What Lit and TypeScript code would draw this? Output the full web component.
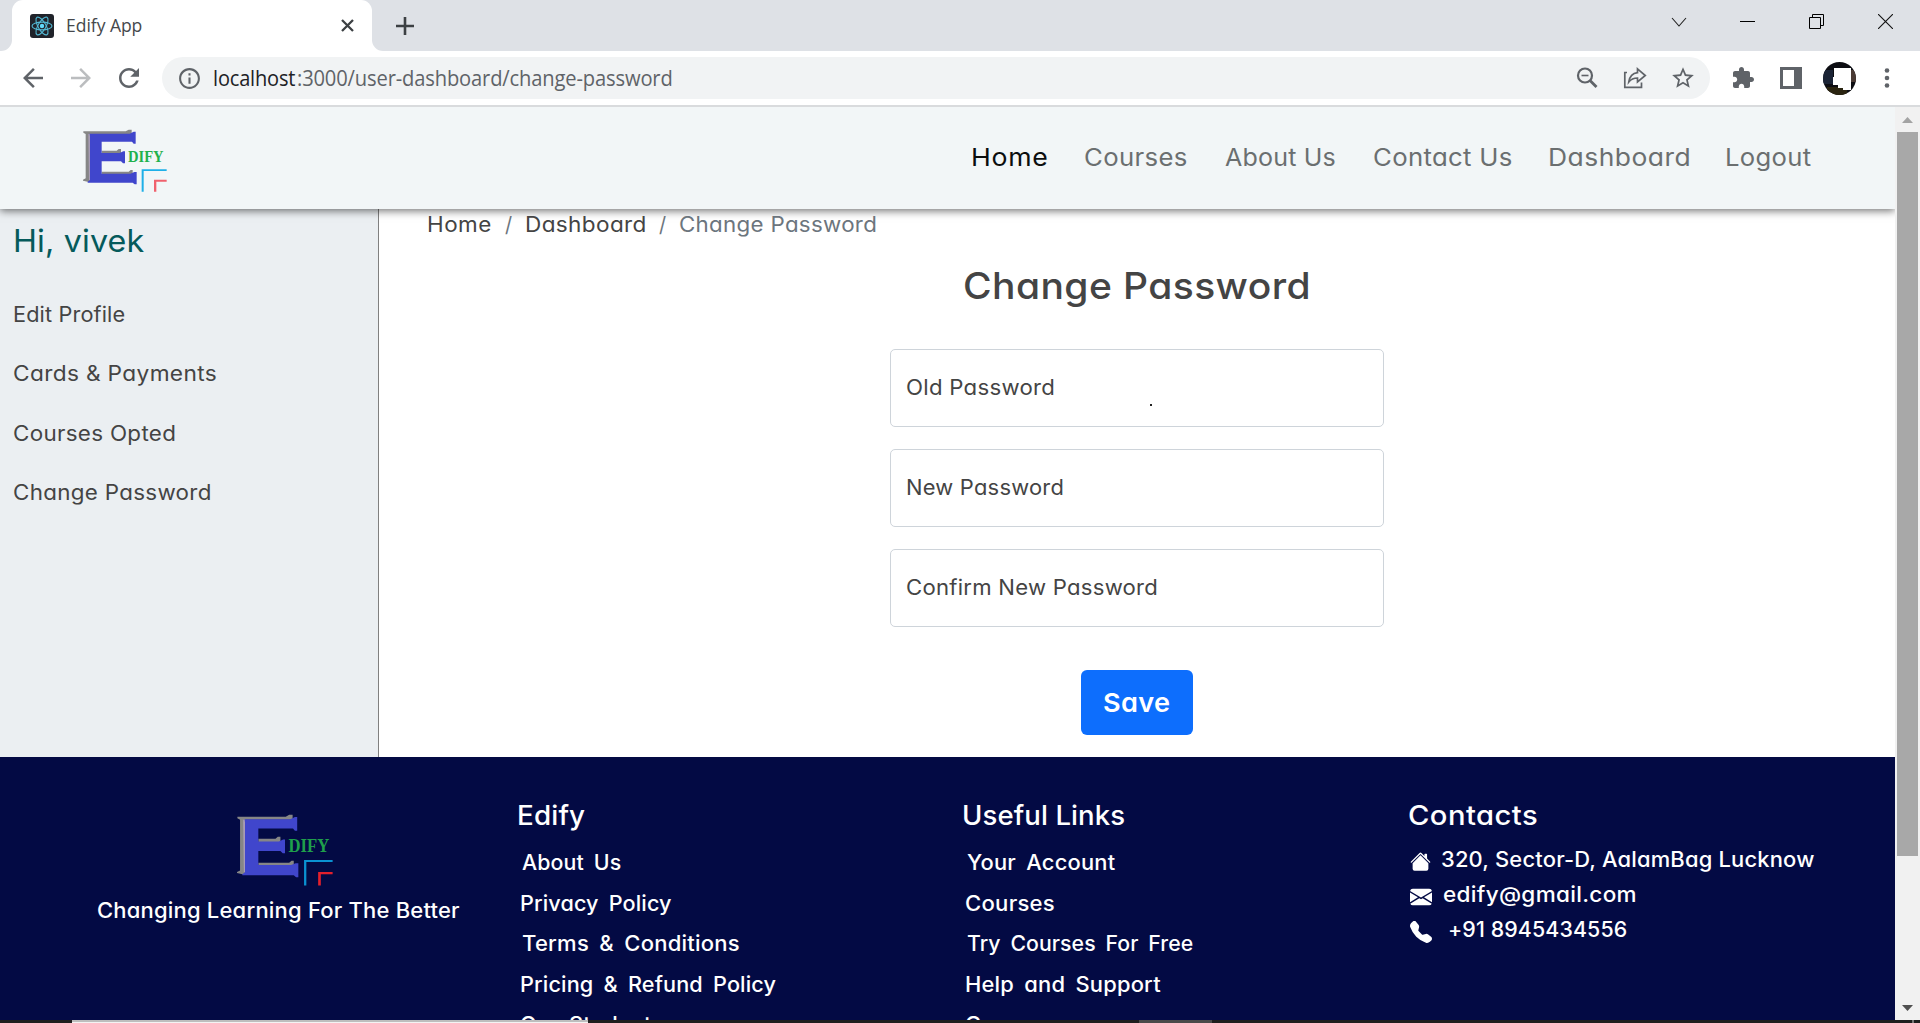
import { LitElement, html, css, svg } from "lit";
import { customElement, property } from "lit/decorators.js";

/**
 * One line of text whose ink spans `width` pixels: `stretch` is the share of the
 * missing width that widens the glyphs, the rest goes into the tracking.
 */
@customElement("fit-text")
class FitText extends LitElement {
  @property({ type: Number }) width = 0;
  @property({ type: Number }) stretch = 0.75;
  @property() text = "";
  static styles = css`
    :host { display: inline-block; flex: none; white-space: pre; text-align: left; }
    .t { display: inline-block; transform-origin: 0 50%; }
  `;
  render() {
    return html`<span class="t">${this.text}</span>`;
  }
  updated() {
    const span = this.renderRoot.querySelector("span") as HTMLElement;
    span.style.letterSpacing = "0px";
    span.style.margin = "0";
    span.style.transform = "none";
    const cs = getComputedStyle(span);
    const ctx = document.createElement("canvas").getContext("2d")!;
    ctx.font = `${cs.fontWeight} ${cs.fontSize} ${cs.fontFamily}`;
    const m = ctx.measureText(this.text);
    const left = -m.actualBoundingBoxLeft;
    const right = m.width - m.actualBoundingBoxRight;
    const ink = span.getBoundingClientRect().width - left - right;
    const scale = 1 + (this.width / ink - 1) * this.stretch;
    const ls = (this.width / scale - ink) / Math.max(1, this.text.length - 1);
    this.style.width = this.width + "px";
    span.style.letterSpacing = ls + "px";
    span.style.marginLeft = -left * scale + "px";
    span.style.marginRight = "-60px";
    span.style.transform = `scaleX(${scale})`;
  }
}

const t = (text: string, width: number, cls = "") =>
  html`<fit-text class=${cls} .text=${text} .width=${width}></fit-text>`;

@customElement("edify-logo")
class EdifyLogo extends LitElement {
  static styles = css`
    :host { display: block; --green: #22b14c; --cyan: #1fb0e8; --red: #f0616d; }
    svg { display: block; width: 100%; height: 100%; }
    .word { font: bold 47px "Liberation Serif", serif; fill: var(--green); }
    .cyan { fill: var(--cyan); }
    .red { fill: var(--red); }
  `;
  render() {
    return html`<svg viewBox="250 388 252 189" preserveAspectRatio="none">
      <path fill="#868686" d="M251 395H378L387 390H396V403H272V541L267 547L250 543V540L258 536V403L251 399ZM306 453H351L357 448H364V462H306ZM306 516H387L393 511H399V524H306Z"/>
      <path fill="#a79bb5" d="M266 403H272V541H268Z"/>
      <path fill="#4046cc" d="M270 402H390L402 396H408V432H402L397 426H306V460H360L371 455H376V491H370L364 485H306V522H392L404 517H411V554H405L399 549H264V546L271 541V410Z"/>
      <text class="word" x="385" y="488" textLength="107" lengthAdjust="spacingAndGlyphs">DIFY</text>
      <path class="cyan" d="M426 509H501V514H432V576H426Z"/>
      <path class="red" d="M463 540H501V546H470V576H463Z"/>
    </svg>`;
  }
}

@customElement("browser-chrome")
class BrowserChrome extends LitElement {
  static styles = css`
    :host { display: block; font-family: "Open Sans", "Noto Sans", sans-serif; }
    svg { display: block; flex: none; }
    .tabs { height: 51px; background: #dee1e6; display: flex; align-items: stretch; }
    .foot { width: 12px; background: #fff; }
    .foot i { display: block; height: 100%; background: #dee1e6; border-bottom-right-radius: 11px; }
    .rest { flex: 1; background: #fff; }
    .rest > div { height: 100%; background: #dee1e6; border-bottom-left-radius: 11px; display: flex; justify-content: space-between; align-items: center; }
    .tab { width: 360px; box-sizing: border-box; background: #fff; border-radius: 11px 11px 0 0; display: flex; align-items: center; padding: 0 18px 0 18px; }
    .title { margin-left: 13px; font-size: 17.8px; line-height: 24px; color: #45484c; flex: 1; margin-top: -1px; }
    .plus { margin-left: 24px; }
    .win { display: flex; height: 43px; align-self: flex-start; }
    .win div { width: 69px; display: flex; align-items: center; justify-content: center; }
    .bar { height: 54px; background: #fff; display: flex; align-items: center; padding: 0 9px; border-bottom: 2px solid #d9dbdd; }
    .c { width: 48px; height: 42px; display: flex; align-items: center; justify-content: center; flex: none; color: #5f6368; }
    .dim { color: #bbbdbf; }
    .omni { height: 42px; flex: 1; margin: 0 9px; border-radius: 21px; background: #f1f3f4; display: flex; align-items: center; padding-right: 3px; font-size: 21px; line-height: 30px; }
    .info { width: 52px; padding-left: 2px; box-sizing: border-box; }
    .host { color: #202124; }
    .path { color: #5f6368; flex: 1; margin-left: 3px; }
  `;
  render() {
    const icon = (d: string, size: number) =>
      html`<svg width=${size} height=${size} viewBox="0 0 24 24"><path fill="currentColor" d=${d}/></svg>`;
    const orbit = (a: number) =>
      svg`<ellipse cx="12" cy="12" rx="10" ry="3.9" transform="rotate(${a} 12 12)"/>`;
    return html`
      <div class="tabs">
        <div class="foot"><i></i></div>
        <div class="tab">
          <svg width="24" height="24"><rect width="24" height="24" rx="3" fill="#20232a"/><g fill="none" stroke="#53b9d4" stroke-width="1.1">${[0, 60, 120].map(orbit)}</g><circle cx="12" cy="12" r="2.2" fill="#61dafb"/></svg>
          <div class="title">${t("Edify App", 74.5)}</div>
          <svg width="13" height="13"><path d="M1 1L12 12M12 1L1 12" stroke="#3c4043" stroke-width="2.3"/></svg>
        </div>
        <div class="rest"><div>
          <svg class="plus" width="18" height="18"><path d="M9 0V18M0 9H18" stroke="#3c4043" stroke-width="2.6"/></svg>
          <div class="win">
            <div><svg width="16" height="16"><path d="M1 4L8 12L15 4" fill="none" stroke="#222" stroke-width="1.1"/></svg></div>
            <div><svg width="15" height="15"><path d="M0 7.5H15" stroke="#000"/></svg></div>
            <div><svg width="15" height="15"><path d="M.5 3.5H11.5V14.5H.5ZM3.5 3.5V.5H14.5V11.5H11.5" fill="none" stroke="#000"/></svg></div>
            <div><svg width="15" height="15"><path d="M0 0L15 15M15 0L0 15" stroke="#111" stroke-width="1.1"/></svg></div>
          </div>
        </div></div>
      </div>
      <div class="bar">
        <div class="c">${icon("M20 11H7.83l5.59-5.59L12 4l-8 8 8 8 1.41-1.41L7.83 13H20v-2z", 30)}</div>
        <div class="c dim">${icon("M12 4l-1.41 1.41L16.17 11H4v2h12.17l-5.58 5.59L12 20l8-8z", 30)}</div>
        <div class="c">${icon("M17.65 6.35C16.2 4.9 14.21 4 12 4c-4.42 0-7.99 3.58-7.99 8s3.57 8 7.99 8c3.73 0 6.84-2.55 7.73-6h-2.08c-.82 2.33-3.04 4-5.65 4-3.31 0-6-2.69-6-6s2.69-6 6-6c1.66 0 3.14.69 4.22 1.78L13 11h7V4l-2.35 2.35z", 30)}</div>
        <div class="omni">
          <div class="c info">${icon("M11 7h2v2h-2zm0 4h2v6h-2zm1-9C6.48 2 2 6.48 2 12s4.48 10 10 10 10-4.48 10-10S17.52 2 12 2zm0 18c-4.41 0-8-3.59-8-8s3.59-8 8-8 8 3.59 8 8-3.59 8-8 8z", 25)}</div>
          ${t("localhost", 81, "host")}
          <div class="path">${t(":3000/user-dashboard/change-password", 374)}</div>
          <div class="c"><svg width="22" height="22" fill="none" stroke="currentColor"><circle cx="9" cy="8.500" r="7" stroke-width="2.200"/><path d="M14 13.500L20.500 20" stroke-width="2.800"/><path d="M5.500 8.500H12.500" stroke-width="1.600"/></svg></div>
          <div class="c"><svg width="24" height="22" fill="none" stroke="currentColor" stroke-width="1.7"><path d="M4 5.5H1.8V20.3H18.5V15.5"/><path d="M14.5 1.8L22.3 8.5L14.5 15V11C10.5 11 8 12.2 5.8 15C6.6 9.8 9.5 6.3 14.5 5.7Z"/></svg></div>
          <div class="c">${icon("M22 9.24l-7.19-.62L12 2 9.19 8.63 2 9.24l5.46 4.73L5.82 21 12 17.27 18.18 21l-1.63-7.03L22 9.24zM12 15.4l-3.76 2.27 1-4.28-3.32-2.88 4.38-.38L12 6.1l1.71 4.04 4.38.38-3.32 2.88 1 4.28L12 15.4z", 26)}</div>
        </div>
        <div class="c">${icon("M20.5 11H19V7c0-1.1-.9-2-2-2h-4V3.5C13 2.12 11.88 1 10.5 1S8 2.12 8 3.5V5H4c-1.1 0-1.99.9-1.99 2v3.8H3.5c1.49 0 2.7 1.21 2.7 2.7s-1.21 2.7-2.7 2.7H2V20c0 1.1.9 2 2 2h3.8v-1.5c0-1.49 1.21-2.7 2.7-2.7 1.49 0 2.7 1.21 2.7 2.7V22H17c1.1 0 2-.9 2-2v-4h1.5c1.38 0 2.5-1.12 2.5-2.5S21.88 11 20.5 11z", 24)}</div>
        <div class="c"><svg width="22" height="22"><path fill="currentColor" fill-rule="evenodd" d="M0 0H22V22H0ZM3 3V19H14V3Z"/></svg></div>
        <div class="c"><svg width="33" height="33"><defs><clipPath id="a"><circle cx="16.5" cy="16.5" r="16.5"/></clipPath></defs><g clip-path="url(#a)"><rect width="33" height="33" fill="#0c0d12"/><path fill="#1b2436" d="M0 8H10V22H0Z"/><path fill="#2a2410" d="M4 25H24V33H4Z"/><path fill="#4a3a34" d="M28 8H33V20H28Z"/><path fill="#fff" d="M11 6H28V28H20V26H15V23H10V15H11Z"/></g></svg></div>
        <div class="c"><svg width="6" height="20" fill="currentColor"><circle cx="3" cy="2.5" r="2.3"/><circle cx="3" cy="10" r="2.3"/><circle cx="3" cy="17.5" r="2.3"/></svg></div>
      </div>`;
  }
}

@customElement("app-root")
class AppRoot extends LitElement {
  static styles = css`
    :host { display: flex; flex-direction: column; width: 1920px; height: 1023px; overflow: hidden; background: #fff; font-family: Inter, "Open Sans", sans-serif; font-feature-settings: "cv11"; font-size: 20.8px; color: #444; }
    svg { display: block; }
    .view { display: flex; height: 913px; flex: none; }
    .page { width: 1895px; display: flex; flex-direction: column; overflow: hidden; }
    .nav { height: 102px; flex: none; box-sizing: border-box; background: #f2f6f7; box-shadow: 0 2px 8px rgba(0,0,0,.55); display: flex; align-items: center; justify-content: space-between; padding: 0 84px 0 83px; position: relative; font-size: 24.2px; color: #6b6f70; }
    .nav edify-logo { width: 84px; height: 63px; margin-top: 5px; }
    .links { display: flex; gap: 38.6px; margin-top: -1px; }
    .on { color: #0c0e0e; }
    .body { display: flex; height: 548px; flex: none; }
    .side { width: 379px; background: #ebeff2; border-right: 1px solid #808080; padding: 12px 0 0 14px; box-sizing: border-box; }
    .hi { font-size: 31.3px; line-height: 41px; color: #055a5b; margin: 0 0 24px 1px; height: 40px; }
    .item { height: 59.3px; line-height: 59.3px; }
    .main { flex: 1; display: flex; flex-direction: column; align-items: center; }
    .crumbs { align-self: flex-start; margin-left: 49.5px; display: flex; gap: 13.5px; height: 31px; line-height: 31px; color: #6c757d; }
    .crumbs .dark { color: #444; }
    h1 { margin: 22px 0 39px; height: 48px; line-height: 48px; font-size: 37px; font-weight: 500; }
    .form { display: flex; flex-direction: column; gap: 22px; position: relative; }
    .field { width: 494px; height: 78px; box-sizing: border-box; border: 1px solid #ced4da; border-radius: 5px; padding-left: 16.5px; line-height: 76px; }
    .dot { position: absolute; left: 260px; top: 55px; width: 2px; height: 2px; background: #222; }
    .save { margin-top: 43px; width: 112px; height: 65px; border: 0; padding: 0; border-radius: 6px; background: #0d6efd; color: #fff; font: 600 26px/65px Inter, sans-serif; font-feature-settings: "cv11"; flex: none; display: flex; justify-content: center; }
    .footer { flex: 1; background: #030a44; color: #fff; font-weight: 500; display: flex; }
    .brand { width: 519.5px; padding-top: 57px; display: flex; flex-direction: column; box-sizing: border-box; padding-left: 98px; }
    .brand edify-logo { width: 96px; height: 72px; margin-left: 139px; --cyan: #0a92d2; --red: #e3202c; --green: #1f9f4b; }
    .tag { line-height: 30px; height: 30px; margin-top: 9.5px; }
    .col { width: 445px; padding-top: 39px; }
    h2 { margin: 0 0 6px; font-size: 27px; line-height: 40px; height: 40px; font-weight: 500; }
    .link { height: 40.5px; line-height: 42.5px; padding-left: 2px; word-spacing: 4px; }
    .contact { height: 35px; line-height: 35px; display: flex; align-items: center; }
    .contact svg { width: 22px; height: 22px; margin: 5px 11px 0 0; }
    .contact svg.house { width: 21px; height: 21px; margin: 3px 11.5px 0 .5px; }
    .contact .tel { margin-left: 7px; }
    .scroll { width: 25px; background: #f1f1f1; display: flex; flex-direction: column; align-items: center; }
    .scroll .up { margin: 10px 0 9px; }
    .thumb { width: 21px; height: 724px; background: #a8a8a8; }
    .scroll .down { margin-top: auto; margin-bottom: 9px; }
    .task { height: 3px; background: #1e1e1e; display: flex; }
    .task .a { margin-left: 72px; width: 516px; background: #f3f3f3; border-top: 2px solid #bdbdbd; box-sizing: border-box; }
    .task .b { margin-left: 551px; width: 73px; background: #4a4a4a; }
    .task .c { margin-left: auto; margin-right: 6px; width: 2px; background: #777; }
  `;
  private nav: [string, number][] = [["Home", 73.5], ["Courses", 101.5], ["About Us", 110], ["Contact Us", 137.5], ["Dashboard", 138.5], ["Logout", 84]];
  private side: [string, number][] = [["Edit Profile", 111], ["Cards & Payments", 201.5], ["Courses Opted", 161], ["Change Password", 196.5]];
  private fields: [string, number][] = [["Old Password", 147], ["New Password", 156], ["Confirm New Password", 250]];
  private about: [string, number][] = [["About Us", 99], ["Privacy Policy", 150.5], ["Terms & Conditions", 217.5], ["Pricing & Refund Policy", 255], ["Our Students", 142]];
  private useful: [string, number][] = [["Your Account", 148], ["Courses", 88.5], ["Try Courses For Free", 226], ["Help and Support", 194.5], ["Careers", 84]];
  render() {
    return html`
      <browser-chrome></browser-chrome>
      <div class="view">
        <div class="page">
          <div class="nav">
            <edify-logo></edify-logo>
            <div class="links">${this.nav.map(([s, w], i) => t(s, w, i === 0 ? "on" : ""))}</div>
          </div>
          <div class="body">
            <div class="side">
              <div class="hi">${t("Hi, vivek", 129)}</div>
              ${this.side.map(([s, w]) => html`<div class="item">${t(s, w)}</div>`)}
            </div>
            <div class="main">
              <div class="crumbs">
                ${t("Home", 63, "dark")}${t("/", 7.5)}${t("Dashboard", 119.5, "dark")}${t("/", 7.5)}${t("Change Password", 196)}
              </div>
              <h1>${t("Change Password", 343.5)}</h1>
              <div class="form">
                ${this.fields.map(([s, w]) => html`<div class="field">${t(s, w)}</div>`)}
                <span class="dot"></span>
              </div>
              <button class="save">${t("Save", 65.5)}</button>
            </div>
          </div>
          <div class="footer">
            <div class="brand"><edify-logo></edify-logo><div class="tag">${t("Changing Learning For The Better", 361.5)}</div></div>
            <div class="col"><h2>${t("Edify", 65.5)}</h2>${this.about.map(([s, w]) => html`<div class="link">${t(s, w)}</div>`)}</div>
            <div class="col"><h2>${t("Useful Links", 160.5)}</h2>${this.useful.map(([s, w]) => html`<div class="link">${t(s, w)}</div>`)}</div>
            <div class="col">
              <h2>${t("Contacts", 128)}</h2>
              <div class="contact"><svg class="house" viewBox="0 0 16 16" fill="#fff"><path d="M8.707 1.5a1 1 0 0 0-1.414 0L.646 8.146a.5.5 0 0 0 .708.708L8 2.207l6.646 6.647a.5.5 0 0 0 .708-.708L13 5.793V2.5a.5.5 0 0 0-.5-.5h-1a.5.5 0 0 0-.5.5v1.293z"/><path d="m8 3.293 6 6V13.5a1.500 1.500 0 0 1-1.500 1.500h-9A1.500 1.500 0 0 1 2 13.500V9.293z"/></svg>${t("320, Sector-D, AalamBag Lucknow", 372)}</div>
              <div class="contact"><svg viewBox="0 0 16 16" fill="#fff"><path d="M.05 3.555A2 2 0 0 1 2 2h12a2 2 0 0 1 1.950 1.555L8 8.414zM0 4.697v7.104l5.803-3.558zM6.761 8.830l-6.570 4.027A2 2 0 0 0 2 14h12a2 2 0 0 0 1.808-1.144l-6.570-4.027L8 9.586zm3.436-.586L16 11.801V4.697z"/></svg>${t("edify@gmail.com", 192)}</div>
              <div class="contact"><svg viewBox="0 0 16 16" fill="#fff"><path d="M1.885.511a1.745 1.745 0 0 1 2.610.163L6.290 2.980c.329.423.445.974.315 1.494l-.547 2.190a.68.68 0 0 0 .178.643l2.457 2.457a.68.68 0 0 0 .644.178l2.189-.547a1.750 1.750 0 0 1 1.494.315l2.306 1.794c.829.645.905 1.870.163 2.611l-1.034 1.034c-.740.740-1.846 1.065-2.877.702a18.600 18.600 0 0 1-7.010-4.420 18.600 18.600 0 0 1-4.420-7.009c-.362-1.030-.037-2.137.703-2.877z"/></svg>${t("+91 8945434556", 177, "tel")}</div>
            </div>
          </div>
        </div>
        <div class="scroll">
          <svg class="up" width="11" height="6"><path d="M0 6L5.500 0L11 6Z" fill="#a3a3a3"/></svg>
          <div class="thumb"></div>
          <svg class="down" width="11" height="6"><path d="M0 0L5.500 6L11 0Z" fill="#505050"/></svg>
        </div>
      </div>
      <div class="task"><div class="a"></div><div class="b"></div><div class="c"></div></div>
    `;
  }
}
